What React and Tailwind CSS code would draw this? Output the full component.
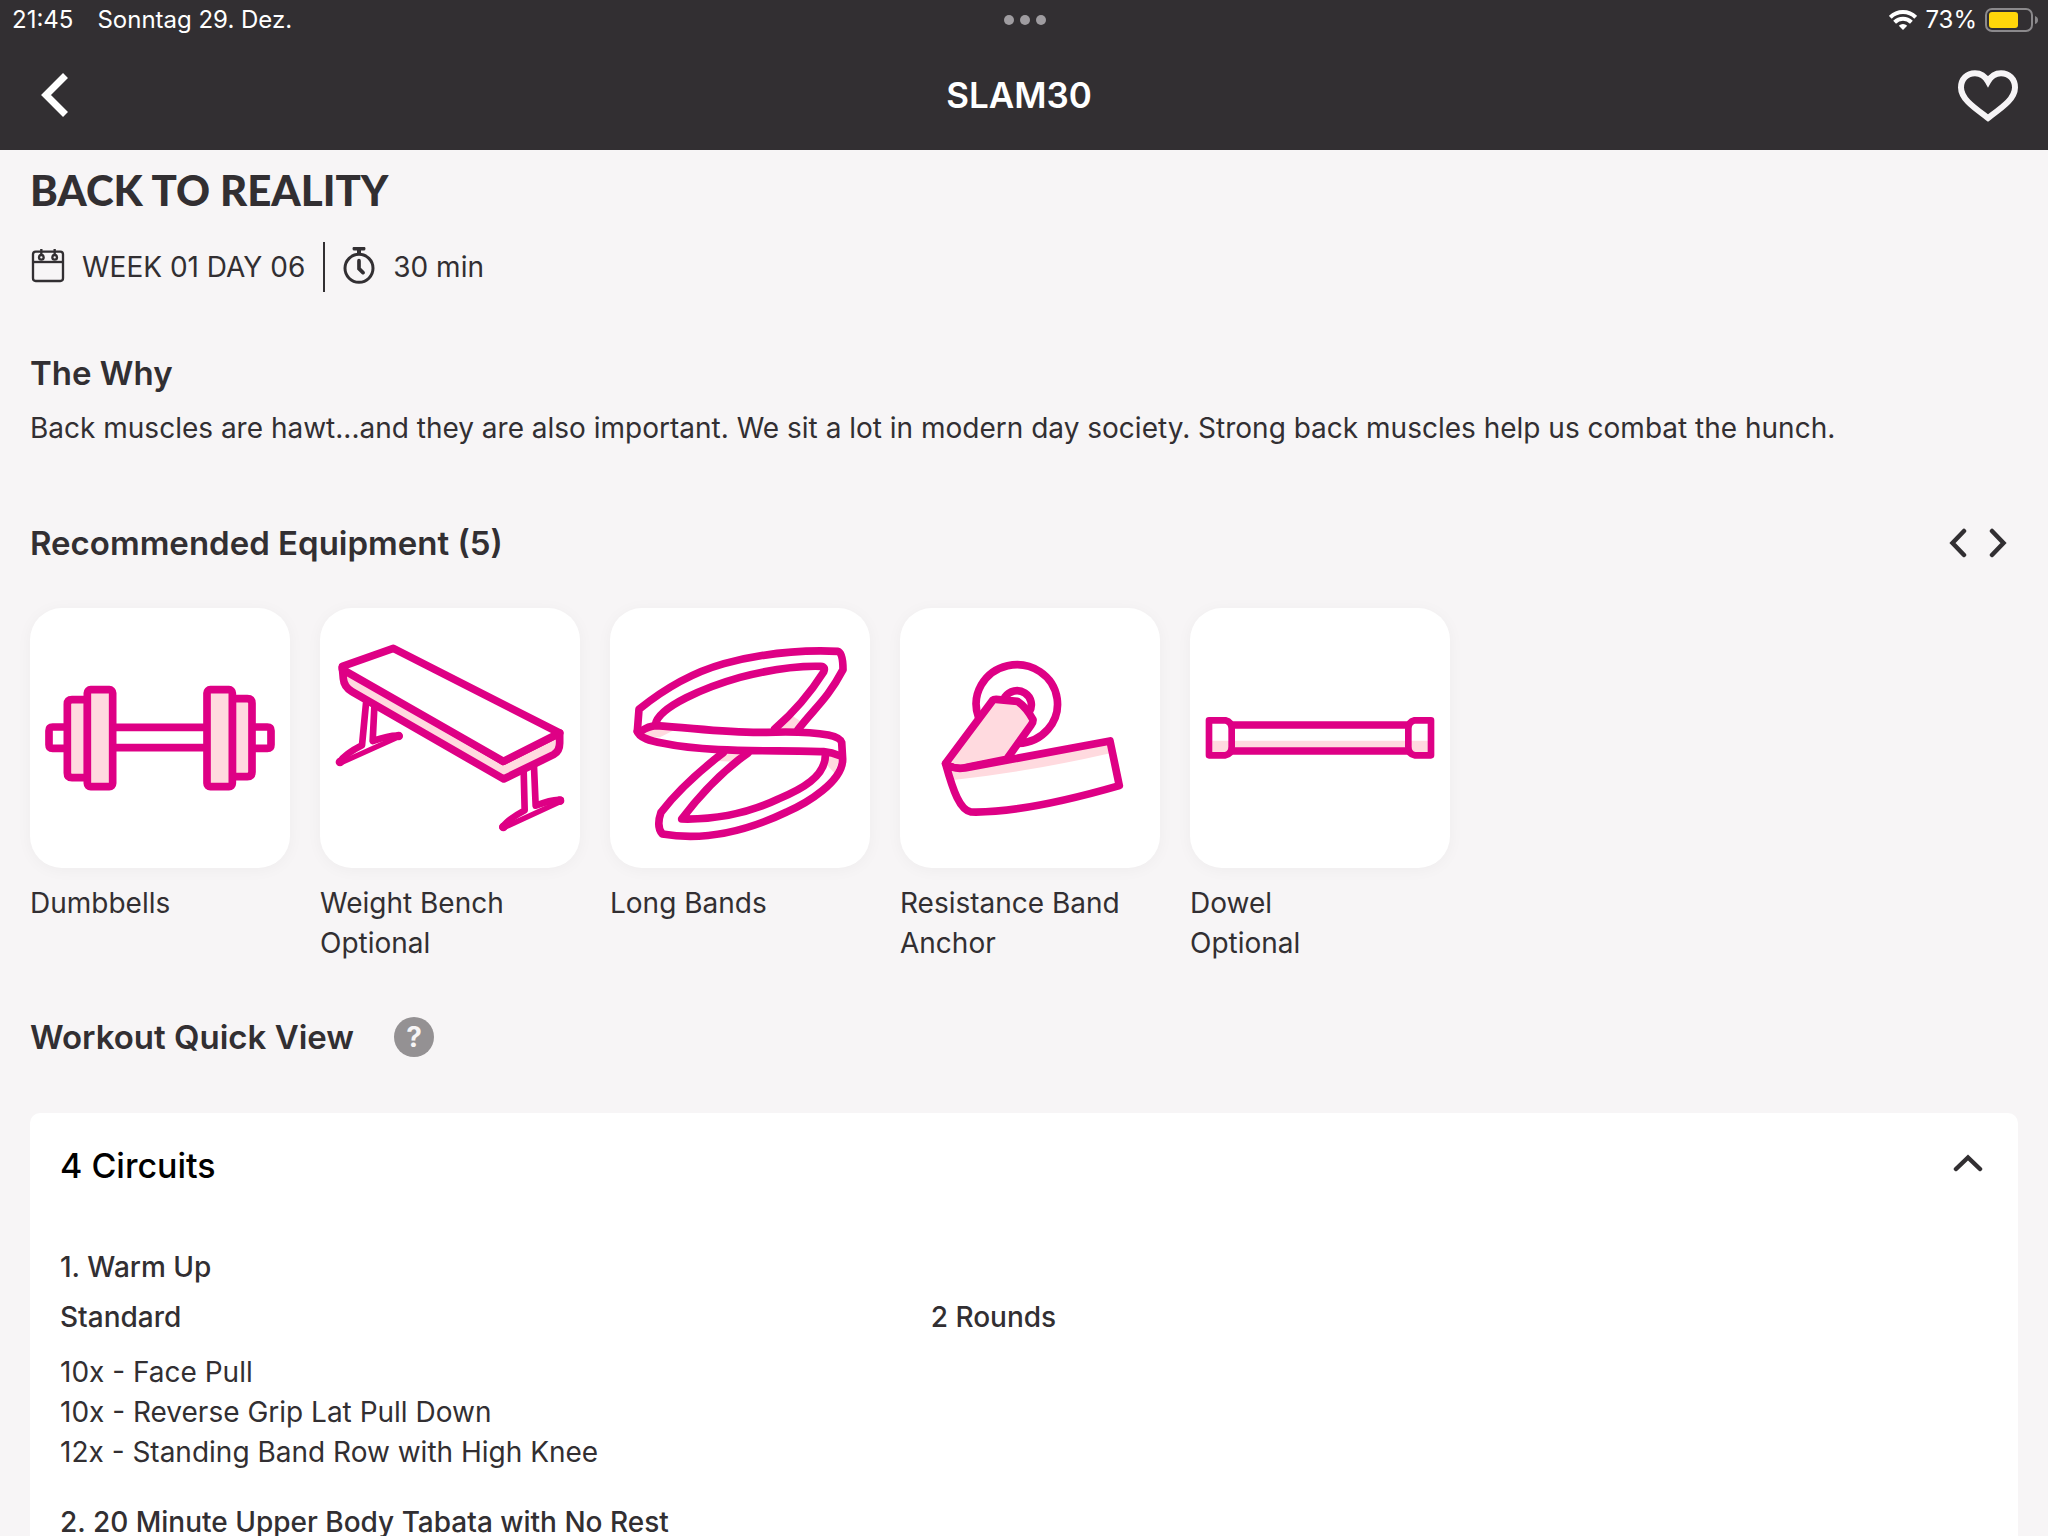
import React, { useState } from 'react';

const PINK = '#de0085';
const BLUSH = '#ffdadf';

const DumbbellArt = () => (
  <svg viewBox="30 24 780 780" className="w-full h-full" fill="none" stroke={PINK} strokeWidth="23" strokeLinejoin="round" aria-hidden="true">
    <path d="M280 382H560M280 443H560" />
    <path d="M142 381H98Q87 381 87 392V434Q87 445 98 445H142M698 381H742Q753 381 753 392V434Q753 445 742 445H698" />
    <path d="M203 299H156Q142 299 142 313V519Q142 533 156 533H203Z" fill={BLUSH} />
    <path d="M637 296H682Q696 296 696 310V516Q696 530 682 530H637Z" fill={BLUSH} />
    <rect x="202" y="269" width="76" height="291" rx="10" fill={BLUSH} />
    <rect x="561" y="269" width="76" height="291" rx="10" fill={BLUSH} />
  </svg>
);

const BenchArt = () => (
  <svg viewBox="30 24 780 780" className="w-full h-full" fill="none" stroke={PINK} strokeWidth="23" strokeLinejoin="round" strokeLinecap="round" aria-hidden="true">
    <g strokeWidth="20">
      <path d="M168 310L156 436Q105 462 89 486M267 407Q240 405 188 423L193 322" />
      <path d="M641 512L644 631Q594 658 578 681M752 600Q728 597 677 617L672 500" />
      <path d="M89 490L269 409M579 684L753 604" strokeWidth="16" />
    </g>
    <g fill={PINK} stroke="none">
      <circle cx="90" cy="486" r="13" />
      <circle cx="266" cy="408" r="13" />
      <circle cx="580" cy="681" r="13" />
      <circle cx="750" cy="602" r="13" />
    </g>
    <path d="M97 202L100 236Q102 261 126 275L581 537L732 463Q750 452 749 426V399L580 484Z" fill={BLUSH} />
    <path d="M97 199L250 145L749 399L580 484L97 208Z" fill="#fff" />
  </svg>
);

const BandsArt = () => (
  <svg viewBox="30 24 780 780" className="w-full h-full" fill="none" stroke={PINK} strokeWidth="23" strokeLinejoin="round" strokeLinecap="round" aria-hidden="true">
    <g stroke="none" fill={BLUSH}>
      <path d="M112 395L165 377L225 389L180 412L135 413Z" />
      <path d="M578 348L604 365L585 392H530Z" />
      <path d="M376 458L430 462L400 485L355 483Z" />
      <path d="M681 460L722 468L704 520L676 490Z" />
    </g>
    <path d="M112 394L117 328Q240 228 372 191Q540 146 714 154Q729 158 729 209C680 301 645 322 594 389" />
    <path d="M166 374C174 320 320 260 420 232Q560 196 662 199Q678 200 671 216Q610 312 524 387" />
    <path d="M112 394C118 414 150 422 190 430C330 460 530 449 671 455Q695 457 722 468" />
    <path d="M124 393Q145 379 168 377C290 385 390 400 500 397Q620 393 685 405Q722 413 725 427L728 478C728 545 620 610 560 636Q360 732 187 702Q168 680 183 637Q250 550 370 458" />
    <path d="M676 460C680 530 600 570 535 597Q400 661 245 657Q340 532 444 459" />
  </svg>
);

const AnchorArt = () => (
  <svg viewBox="30 24 780 780" className="w-full h-full" fill="none" stroke={PINK} strokeWidth="23" strokeLinejoin="round" strokeLinecap="round" aria-hidden="true">
    <path d="M265 350A122 118 0 1 1 385 430" />
    <path d="M345 291A42 41 0 0 1 417 337" />
    <path d="M167 490L308 301Q311 298 318 298L382 304Q408 321 429 359Q430 366 424 374L350 478L210 506Q185 505 167 490Z" fill={BLUSH} />
    <path d="M176 505Q200 509 225 504L660 423L688 555Q420 643 243 636C215 630 190 570 171 500Z" fill="#fff" stroke="none" />
    <path d="M180 504L660 426L664 459Q420 515 190 540Z" fill={BLUSH} stroke="none" />
    <path d="M167 492Q190 509 225 504L660 423L688 557Q400 640 243 636C210 630 190 575 167 492Z" />
  </svg>
);

const DowelArt = () => (
  <svg viewBox="30 24 780 780" className="w-full h-full" fill="none" stroke={PINK} strokeWidth="22" aria-hidden="true">
    <path d="M97 422H747V456H97Z" fill={BLUSH} stroke="none" />
    <path d="M154 375H688M154 453H688" />
    <path d="M87 361H136Q155 366 155 386V440Q155 461 136 466H87Z" strokeWidth="20" strokeLinejoin="round" />
    <path d="M753 361H704Q685 366 685 386V440Q685 461 704 466H753Z" strokeWidth="20" strokeLinejoin="round" />
  </svg>
);

const equipment = [
  { name: 'Dumbbells', Art: DumbbellArt },
  { name: 'Weight Bench', note: 'Optional', Art: BenchArt },
  { name: 'Long Bands', Art: BandsArt },
  { name: 'Resistance Band Anchor', Art: AnchorArt },
  { name: 'Dowel', note: 'Optional', Art: DowelArt },
];

const circuits = [
  {
    title: '1. Warm Up',
    type: 'Standard',
    rounds: '2 Rounds',
    moves: ['10x - Face Pull', '10x - Reverse Grip Lat Pull Down', '12x - Standing Band Row with High Knee'],
  },
  { title: '2. 20 Minute Upper Body Tabata with No Rest', moves: [] },
];

const StatusBar = () => (
  <div className="grid grid-cols-[1fr_auto_1fr] items-center h-10 pl-3 pr-[10px] text-2xl leading-7">
    <div className="flex gap-6">
      <span>21:45</span>
      <span>Sonntag 29. Dez.</span>
    </div>
    <div className="flex gap-[6px]">
      <span className="size-[10px] rounded-full bg-[#9f9ca0]" />
      <span className="size-[10px] rounded-full bg-[#9f9ca0]" />
      <span className="size-[10px] rounded-full bg-[#9f9ca0]" />
    </div>
    <div className="flex items-center justify-end gap-2">
      <svg width="28" height="20" viewBox="0 0 28 20" fill="none" stroke="#fff" strokeWidth="4" aria-hidden="true">
        <path d="M1.3 7.3A18 18 0 0 1 26.7 7.3" />
        <path d="M5.6 12.2A12 12 0 0 1 22.4 12.2" />
        <path d="M14 20L9.8 15.8A6 6 0 0 1 18.2 15.8Z" fill="#fff" stroke="none" />
      </svg>
      <span>73%</span>
      <svg width="53" height="24" viewBox="0 0 53 24" aria-hidden="true">
        <rect x="1" y="1" width="46" height="22" rx="6" fill="none" stroke="#8b898c" strokeWidth="2" />
        <rect x="4" y="4" width="29" height="16" rx="3" fill="#ffd60a" />
        <path d="M50 8Q53 9 53 12Q53 15 50 16Z" fill="#8b898c" />
      </svg>
    </div>
  </div>
);

const CalendarIcon = () => (
  <svg width="36" height="38" viewBox="90 747 108 114" fill="none" stroke="#322f32" strokeWidth="7" aria-hidden="true">
    <rect x="99" y="758" width="90" height="88" rx="8" />
    <path d="M99 789H189" />
    <circle cx="124" cy="775" r="7" />
    <circle cx="164" cy="775" r="7" />
    <path d="M124 750V770M164 750V770" />
  </svg>
);

const StopwatchIcon = () => (
  <svg width="32" height="40" viewBox="1037 743 96 120" fill="none" stroke="#322f32" strokeWidth="9" aria-hidden="true">
    <circle cx="1085" cy="807" r="42" />
    <path d="M1085 750V765" strokeWidth="12" />
    <path d="M1071 748H1099M1085 784V808L1097 820" strokeWidth="11" strokeLinecap="round" />
  </svg>
);

const App = () => {
  const [isOpen, setIsOpen] = useState(true);

  return (
    <div className="h-screen flex flex-col overflow-hidden bg-[#f7f5f6] text-[#322f32] font-['Inter',sans-serif]">
      <header className="shrink-0 bg-[#322f32] text-white">
        <StatusBar />
        <div className="flex items-center justify-between h-[110px] px-[30px]">
          <button type="button" aria-label="Back" className="w-[50px] flex justify-center">
            <svg width="28" height="46" viewBox="0 0 28 46" fill="none" stroke="#fff" strokeWidth="7" aria-hidden="true">
              <path d="M24.5 3.5L5 23L24.5 42.5" />
            </svg>
          </button>
          <h1 className="text-[35px] leading-10 font-semibold">SLAM30</h1>
          <button type="button" aria-label="Favorite">
            <svg width="60" height="54" viewBox="0 -2 60 54" fill="none" stroke="#f6f4f6" strokeWidth="6" aria-hidden="true">
              <path d="M30 11.5C27 6 22 3.2 17 3.2C9 3.2 3 9 3 17.5C3 29 16 37.5 30 48C44 37.5 57 29 57 17.5C57 9 51 3.2 43 3.2C38 3.2 33 6 30 11.5Z" />
            </svg>
          </button>
        </div>
      </header>

      <main className="flex-1 min-h-0 overflow-hidden px-[30px] pt-5 text-[28px] leading-10">
        <h2 className="text-[42px] font-black font-['Lato',sans-serif]">BACK TO REALITY</h2>
        <div className="mt-8 flex items-center h-[50px]">
          <CalendarIcon />
          <span className="ml-4">WEEK 01 DAY 06</span>
          <span className="mx-[18px] w-[2px] h-full bg-[#322f32]" />
          <StopwatchIcon />
          <span className="ml-[18px]">30 min</span>
        </div>

        <section className="mt-[61px]">
          <h3 className="text-[33px] font-semibold">The Why</h3>
          <p className="mt-[15px]">
            Back muscles are hawt...and they are also important. We sit a lot in modern day society. Strong back muscles help us combat the hunch.
          </p>
        </section>

        <section className="mt-[75px]">
          <div className="flex items-center justify-between">
            <h3 className="text-[33px] font-semibold">Recommended Equipment (5)</h3>
            <div className="flex">
              <button type="button" aria-label="Previous" className="size-10 flex items-center justify-center">
                <svg width="18" height="30" viewBox="0 0 18 30" fill="none" stroke="#322f32" strokeWidth="4.5" strokeLinecap="round" aria-hidden="true">
                  <path d="M15 3L3.5 15L15 27" />
                </svg>
              </button>
              <button type="button" aria-label="Next" className="size-10 flex items-center justify-center">
                <svg width="18" height="30" viewBox="0 0 18 30" fill="none" stroke="#322f32" strokeWidth="4.5" strokeLinecap="round" aria-hidden="true">
                  <path d="M3 3L14.5 15L3 27" />
                </svg>
              </button>
            </div>
          </div>
          <ul className="mt-[45px] flex gap-[30px]">
            {equipment.map(({ name, note, Art }) => (
              <li key={name} className="w-[260px]">
                <div className="size-[260px] rounded-[32px] bg-white shadow-[0_2px_16px_rgba(0,0,0,0.04)]">
                  <Art />
                </div>
                <p className="mt-[15px]">{name}</p>
                {note && <p>{note}</p>}
              </li>
            ))}
          </ul>
        </section>

        <section className="mt-[54px]">
          <div className="flex items-center gap-10">
            <h3 className="text-[33px] font-semibold">Workout Quick View</h3>
            <button type="button" aria-label="Help" className="size-10 rounded-full bg-[#949193] text-[#f7f5f6] text-[28px] leading-10 font-bold">
              ?
            </button>
          </div>

          <div className="mt-14 rounded-[10px] bg-white px-[30px] pt-[33px] pb-[30px]">
            <div className="flex items-start justify-between text-black">
              <h3 className="text-[34px] font-medium">4 Circuits</h3>
              <button
                type="button"
                aria-label="Toggle circuits"
                aria-expanded={isOpen}
                onClick={() => setIsOpen(!isOpen)}
                className="w-10 h-[34px] flex items-center justify-center"
              >
                <svg width="30" height="18" viewBox="0 0 30 18" fill="none" stroke="#322f32" strokeWidth="4.5" strokeLinecap="round" aria-hidden="true">
                  <path d="M3 15L15 3.5L27 15" />
                </svg>
              </button>
            </div>
            {isOpen && (
              <div className="mt-[61px] flex flex-col gap-[30px]">
                {circuits.map((circuit) => (
                  <div key={circuit.title}>
                    <h4 className="font-medium">{circuit.title}</h4>
                    {circuit.type && (
                      <div className="mt-[10px] grid grid-cols-[14fr_17fr] font-medium">
                        <span>{circuit.type}</span>
                        <span>{circuit.rounds}</span>
                      </div>
                    )}
                    {circuit.moves.length > 0 && (
                      <ul className="mt-[15px]">
                        {circuit.moves.map((move) => (
                          <li key={move}>{move}</li>
                        ))}
                      </ul>
                    )}
                  </div>
                ))}
              </div>
            )}
          </div>
        </section>
      </main>
    </div>
  );
};

export default App;
